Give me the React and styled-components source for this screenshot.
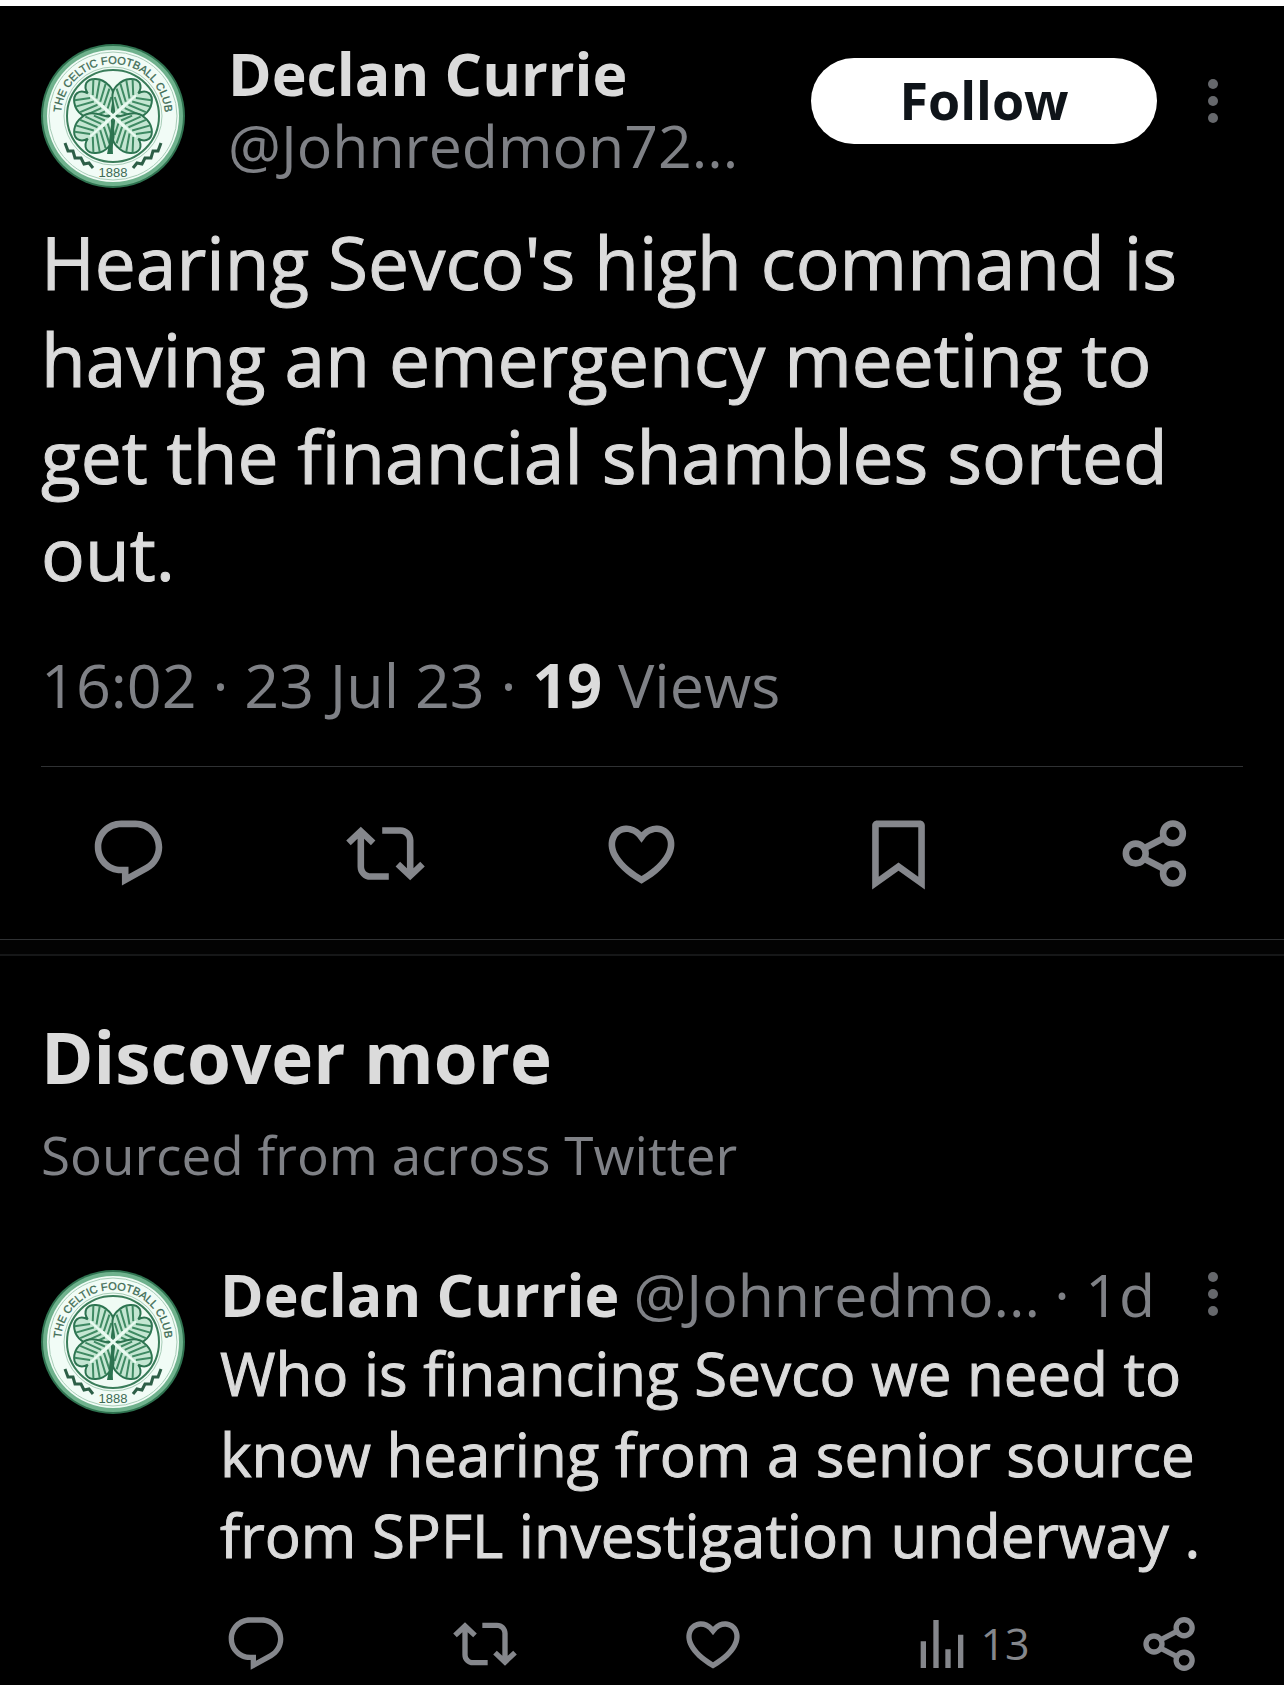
import React from "react";
import styled, { createGlobalStyle } from "styled-components";

const GlobalStyle = createGlobalStyle`
    * {
        box-sizing: border-box;
    }
    body {
        margin: 0;
        background-color: #000;
        font-family: "Open Sans", "Noto Sans", sans-serif;
        color: #dbdbdb;
    }
`

const Page = styled.main`
    min-height: 100vh;
    border-top: 6px solid #fff;
    background-color: #000;
`

const MainPost = styled.article`
    padding: 31px 41px 0;
`

const PostHeader = styled.header`
    display: flex;
    align-items: flex-start;
`

const AvatarSvg = styled.svg`
    flex: none;
    display: block;
    width: 144px;
    height: 144px;
    margin-top: ${props => props.$top}px;
`

const Author = styled.div`
    flex: 1;
    min-width: 0;
    margin-left: 43px;
    line-height: 72px;
    white-space: nowrap;
`

const Name = styled.strong`
    display: ${props => (props.$block ? "block" : "inline")};
    font-size: 59px;
    font-weight: 700;
`

const Handle = styled.span`
    display: block;
    font-size: 59px;
    color: #7f8186;
`

const FollowButton = styled.button`
    flex: none;
    width: 346px;
    height: 86px;
    margin-top: 21px;
    padding: 0 0 2px;
    border: none;
    border-radius: 43px;
    background-color: #fff;
    color: #0f1419;
    font-family: inherit;
    font-size: 52px;
    line-height: 84px;
    font-weight: 700;
    cursor: pointer;
`

const MenuButton = styled.button`
    flex: none;
    display: flex;
    align-items: center;
    justify-content: center;
    width: 60px;
    height: ${props => props.$height}px;
    margin-top: ${props => props.$top}px;
    margin-left: ${props => props.$left}px;
    padding: 0;
    border: none;
    background: none;
    color: #66686c;
    cursor: pointer;
`

const PostText = styled.p`
    margin: 25px 0 0;
    font-size: 73px;
    line-height: 97px;
    -webkit-text-stroke: 1px currentColor;
`

const Meta = styled.p`
    margin: 44px 0 41px;
    font-size: 61px;
    line-height: 80px;
    color: #7f8186;

    strong {
        color: #dbdbdb;
    }
`

const Divider = styled.hr`
    height: 1px;
    margin: 0;
    border: none;
    background-color: #2f3133;
`

const MainActions = styled.div`
    display: grid;
    grid-template-columns: repeat(5, 1fr);
    justify-items: center;
    align-items: center;
    height: 172px;
`

const Separator = styled.div`
    height: 17px;
    border-top: 1px solid #2f3133;
    border-bottom: 2px solid #161718;
    background-color: #030303;
`

const ActionButton = styled.button`
    display: flex;
    align-items: center;
    gap: 7px;
    padding: 0;
    border: none;
    background: none;
    color: #85878c;
    font-family: inherit;
    font-size: 43px;
    line-height: 64px;
    cursor: pointer;

    svg {
        display: block;
        flex: none;
        width: ${props => props.$size}px;
        height: ${props => props.$size}px;
    }
`

const Discover = styled.section`
    padding: 56px 41px 7px;
`

const DiscoverTitle = styled.h2`
    margin: 0;
    font-size: 71px;
    font-weight: 700;
    line-height: 90px;
`

const DiscoverSource = styled.p`
    margin: 18px 0 65px;
    font-size: 53px;
    line-height: 70px;
    color: #7f8186;
`

const Reply = styled.article`
    display: flex;
    align-items: flex-start;
`

const ReplyBody = styled.div`
    flex: 1;
    min-width: 0;
    margin-left: 35px;
`

const ReplyHeader = styled.header`
    display: flex;
    align-items: flex-start;
    gap: 14px;
    line-height: 78px;
    white-space: nowrap;
`

const Time = styled.span`
    flex: 1;
    text-align: right;
    font-size: 59px;
    color: #7f8186;
`

const ReplyText = styled.p`
    margin: 0;
    font-size: 60px;
    line-height: 81px;
    -webkit-text-stroke: 1px currentColor;
`

const ReplyActions = styled.div`
    display: grid;
    grid-template-columns: repeat(4, 1fr) 64px;
    justify-items: start;
    margin: 36px 41px 0 4px;
`

const iconPaths = {
    Reply: "M1.751 10c0-4.42 3.584-8 8.005-8h4.366c4.49 0 8.129 3.64 8.129 8.13 0 2.96-1.607 5.68-4.196 7.11l-8.054 4.46v-3.69h-.067c-4.49.1-8.183-3.51-8.183-8.01zm8.005-6c-3.317 0-6.005 2.69-6.005 6 0 3.37 2.77 6.08 6.138 6.01l.351-.01h1.761v2.3l5.087-2.81c1.951-1.08 3.163-3.13 3.163-5.36 0-3.39-2.744-6.13-6.129-6.13H9.756z",
    Retweet: "M4.5 3.88l4.432 4.14-1.364 1.46L5.5 7.55V16c0 1.1.896 2 2 2H13v2H7.5c-2.209 0-4-1.79-4-4V7.55L1.432 9.48.068 8.02 4.5 3.88zM16.5 6H11V4h5.5c2.209 0 4 1.79 4 4v8.45l2.068-1.93 1.364 1.46-4.432 4.14-4.432-4.14 1.364-1.46 2.068 1.93V8c0-1.1-.896-2-2-2z",
    Like: "M16.697 5.5c-1.222-.06-2.679.51-3.89 2.16l-.805 1.09-.806-1.09C9.984 6.01 8.526 5.44 7.304 5.5c-1.243.07-2.349.78-2.91 1.91-.552 1.12-.633 2.78.479 4.82 1.074 1.97 3.257 4.27 7.129 6.61 3.87-2.34 6.052-4.64 7.126-6.61 1.111-2.04 1.03-3.7.477-4.82-.561-1.13-1.666-1.84-2.908-1.91zm4.187 7.69c-1.351 2.48-4.001 5.12-8.379 7.67l-.503.3-.504-.3c-4.379-2.55-7.029-5.19-8.382-7.67-1.36-2.5-1.41-4.86-.514-6.67.887-1.79 2.647-2.91 4.601-3.01 1.651-.09 3.368.56 4.798 2.01 1.429-1.45 3.146-2.1 4.796-2.01 1.954.1 3.714 1.22 4.601 3.01.896 1.81.846 4.17-.514 6.67z",
    Bookmark: "M4 3.5C4 2.67 4.67 2 5.5 2h13c.83 0 1.5.67 1.5 1.5v19.44l-8-5.71-8 5.71V3.5zM6 4v15.06l6-4.29 6 4.29V4H6z",
    Views: "M8.75 21V3h2v18h-2zM18 21V8.5h2V21h-2zM4 21V11h2v10H4zm9.25 0v-7h2v7h-2z",
}

const Icon = ({ name }) => (
    <svg viewBox="0 0 24 24" fill="currentColor" aria-hidden="true">
        {name === "Share" ? (
            <g fill="none" stroke="currentColor" strokeWidth="2">
                <circle cx="6" cy="12" r="3" />
                <circle cx="17.3" cy="5.9" r="3" />
                <circle cx="17.3" cy="18.1" r="3" />
                <path d="M8.6 10.4l6-3.1M8.6 13.6l6 3.1" />
            </g>
        ) : (
            <path d={iconPaths[name]} />
        )}
    </svg>
)

const DotsIcon = () => (
    <svg width="10" height="44" viewBox="0 0 10 44" fill="currentColor" aria-hidden="true">
        <circle cx="5" cy="5" r="5" />
        <circle cx="5" cy="22" r="5" />
        <circle cx="5" cy="39" r="5" />
    </svg>
)

const Leaf = ({ angle }) => (
    <g transform={`rotate(${angle})`}>
        <path
            d="M0-1C-4-8-20-10-20-24C-21-35-13-43-7-42C-3-41-1-38 0-34C1-38 3-41 7-42C13-43 21-35 20-24C20-10 4-8 0-1Z"
            fill="#c4e6d2"
            stroke="#2c7350"
            strokeWidth="2"
        />
        <path
            d="M-2-9l-11-5M-2-14l-16-7M-2-19l-17-8M-2-24l-16-10M-2-29l-12-10M2-9l11-5M2-14l16-7M2-19l17-8M2-24l16-10M2-29l12-10"
            stroke="#3f8a63"
            strokeWidth="2"
        />
        <path d="M0 0V-31" stroke="#eafaf1" strokeWidth="2" />
    </g>
)

const Avatar = ({ id, top }) => (
    <AvatarSvg $top={top} viewBox="0 0 144 144" role="img" aria-label="Declan Currie">
        <circle cx="72" cy="72" r="72" fill="#2f7350" />
        <circle cx="72" cy="72" r="70" fill="#6fb28d" />
        <circle cx="72" cy="72" r="66" fill="#f1fcf6" />
        <circle cx="72" cy="72" r="64" fill="none" stroke="#a8cdb8" strokeWidth="1" />
        <circle cx="72" cy="72" r="46" fill="#effbf4" stroke="#3a7d5a" strokeWidth="2" />
        <circle cx="72" cy="72" r="49" fill="none" stroke="#a8cdb8" strokeWidth="1" />
        <path id={id} d="M72 124A52 52 0 0 1 72 20A52 52 0 0 1 72 124" fill="none" />
        <text fontFamily="'Liberation Sans', sans-serif" fontSize="11" fill="#3d6b54" stroke="#3d6b54" strokeWidth="0.3">
            <textPath href={`#${id}`} startOffset="50%" textAnchor="middle">THE CELTIC FOOTBALL CLUB</textPath>
        </text>
        <text x="72" y="133" textAnchor="middle" fontFamily="'Liberation Sans', sans-serif" fontSize="13" fill="#3d6b54">1888</text>
        <g fill="none" stroke="#2d5f47" strokeWidth="3">
            <path d="M24 99l3 8 5 0 2 7 6 0 3 6 5-1 4 5" />
            <path d="M120 99l-3 8-5 0-2 7-6 0-3 6-5-1-4 5" />
        </g>
        <g transform="translate(72 72)">
            <Leaf angle={-48} />
            <Leaf angle={48} />
            <Leaf angle={132} />
            <Leaf angle={-132} />
            <path d="M0 2C-4 14-3 26-6 38H0C-1 26 3 14 0 2Z" fill="#2c7350" />
            <path d="M-13-12L13 12M13-12L-13 12" stroke="#eafaf1" strokeWidth="3" />
        </g>
    </AvatarSvg>
)

const mainActions = ["Reply", "Retweet", "Like", "Bookmark", "Share"]

const replyActions = [
    { name: "Reply" },
    { name: "Retweet" },
    { name: "Like" },
    { name: "Views", count: 13 },
    { name: "Share" }
]

const App = () => (
    <Page>
        <GlobalStyle />
        <MainPost>
            <PostHeader>
                <Avatar id="ring-main" top={7} />
                <Author>
                    <Name $block>Declan Currie</Name>
                    <Handle>@Johnredmon72...</Handle>
                </Author>
                <FollowButton>Follow</FollowButton>
                <MenuButton $top={21} $left={26} $height={86} aria-label="More options">
                    <DotsIcon />
                </MenuButton>
            </PostHeader>
            <PostText>
                Hearing Sevco's high command is having an emergency meeting to get the financial shambles sorted out.
            </PostText>
            <Meta>16:02 · 23 Jul 23 · <strong>19</strong> Views</Meta>
            <Divider />
        </MainPost>
        <MainActions>
            {mainActions.map(name => (
                <ActionButton key={name} $size={79} aria-label={name}>
                    <Icon name={name} />
                </ActionButton>
            ))}
        </MainActions>
        <Separator />
        <Discover>
            <DiscoverTitle>Discover more</DiscoverTitle>
            <DiscoverSource>Sourced from across Twitter</DiscoverSource>
            <Reply>
                <Avatar id="ring-reply" top={15} />
                <ReplyBody>
                    <ReplyHeader>
                        <Name>Declan Currie</Name>
                        <Handle>@Johnredmo...</Handle>
                        <Time>· 1d</Time>
                        <MenuButton $top={0} $left={14} $height={78} aria-label="More options">
                            <DotsIcon />
                        </MenuButton>
                    </ReplyHeader>
                    <ReplyText>
                        Who is financing Sevco we need to know hearing from a senior source from SPFL investigation underway .
                    </ReplyText>
                    <ReplyActions>
                        {replyActions.map(action => (
                            <ActionButton key={action.name} $size={64} aria-label={action.name}>
                                <Icon name={action.name} />
                                {action.count}
                            </ActionButton>
                        ))}
                    </ReplyActions>
                </ReplyBody>
            </Reply>
        </Discover>
    </Page>
)

export default App;
